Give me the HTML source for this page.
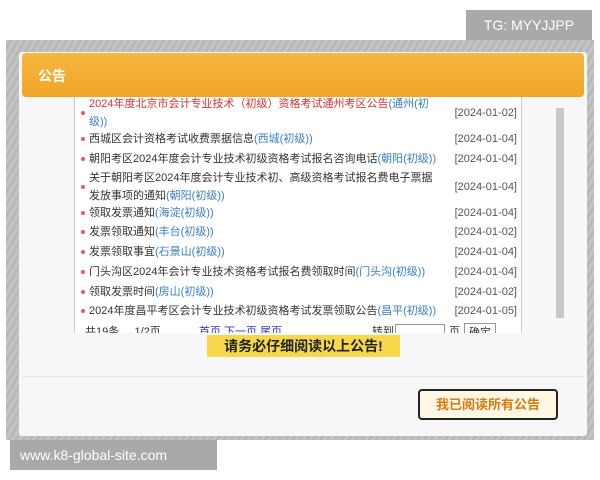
<!DOCTYPE html>
<html><head><meta charset="utf-8"><style>
*{margin:0;padding:0;box-sizing:border-box}
body{width:600px;height:480px;background:#fff;position:relative;overflow:hidden;font-family:"Liberation Sans","Noto Sans CJK SC",sans-serif}
.frame{position:absolute;left:6px;top:40px;width:588px;height:400px;background:repeating-linear-gradient(120deg,#c4c4c4 0 3px,#b8b8b8 3px 6px)}
.panel{position:absolute;left:19px;top:52px;width:568px;height:384px;background:#f7f7f7;border-radius:3px}
.head{position:absolute;left:22px;top:53px;width:562px;height:44px;background:linear-gradient(#f7b740,#f0a526);border-radius:4px;color:#fff;font-weight:bold;font-size:14px;padding:13px 0 0 16px}
.list{position:absolute;left:74px;top:97px;width:448px;height:236px;background:#fff;border-left:1px solid #b8cfe6;border-right:1px solid #b8cfe6;overflow:hidden;font-size:11px;color:#333}
.row{position:absolute;left:0;width:446px}
.row .t{position:absolute;left:14px;width:352px;line-height:18px}
.row .d{position:absolute;right:4px;color:#555;line-height:18px}
.row .b{position:absolute;left:6px;width:4px;height:4px;border-radius:2px;background:#e56;}
.c{color:#3a7fc4}
.sb{position:absolute;left:556px;top:108px;width:8px;height:210px;background:#c8c8c8}
.tg{position:absolute;left:466px;top:10px;width:126px;height:30px;background:#a9a9a9;color:#fff;font-size:14px;text-align:center;line-height:30px}
.ws{position:absolute;left:10px;top:440px;width:207px;height:30px;background:#a9a9a9;color:#fff;font-size:14px;line-height:30px;padding-left:10px}
.note{position:absolute;left:207px;top:335px;width:193px;height:22px;background:#f7d84a;font-weight:bold;font-size:14px;color:#222;text-align:center;line-height:22px}
.sep{position:absolute;left:22px;top:376px;width:562px;height:1px;background:#e6e6e6}
.btn{position:absolute;left:418px;top:389px;width:140px;height:31px;border:2px solid #222;border-radius:4px;background:#fff7e4;color:#d67b12;font-weight:bold;font-size:13px;text-align:center;line-height:27px}
</style></head><body>
<div class="tg">TG: MYYJJPP</div>
<div class="frame"></div>
<div class="panel"></div>
<div class="head">公告</div>
<div class="list">
<div class="row" style="top:-2px"><span class="b" style="top:16px"></span><div class="t" style="color:#e03030">2024年度北京市会计专业技术（初级）资格考试通州考区公告<span class="c">(通州(初级))</span></div><div class="d" style="top:9px">[2024-01-02]</div></div>
<div class="row" style="top:33px"><span class="b" style="top:7px"></span><div class="t">西城区会计资格考试收费票据信息<span class="c">(西城(初级))</span></div><div class="d">[2024-01-04]</div></div>
<div class="row" style="top:53px"><span class="b" style="top:7px"></span><div class="t" style="width:370px">朝阳考区2024年度会计专业技术初级资格考试报名咨询电话<span class="c">(朝阳(初级))</span></div><div class="d">[2024-01-04]</div></div>
<div class="row" style="top:72px"><span class="b" style="top:16px"></span><div class="t">关于朝阳考区2024年度会计专业技术初、高级资格考试报名费电子票据发放事项的通知<span class="c">(朝阳(初级))</span></div><div class="d" style="top:9px">[2024-01-04]</div></div>
<div class="row" style="top:107px"><span class="b" style="top:7px"></span><div class="t">领取发票通知<span class="c">(海淀(初级))</span></div><div class="d">[2024-01-04]</div></div>
<div class="row" style="top:126px"><span class="b" style="top:7px"></span><div class="t">发票领取通知<span class="c">(丰台(初级))</span></div><div class="d">[2024-01-02]</div></div>
<div class="row" style="top:146px"><span class="b" style="top:7px"></span><div class="t">发票领取事宜<span class="c">(石景山(初级))</span></div><div class="d">[2024-01-04]</div></div>
<div class="row" style="top:166px"><span class="b" style="top:7px"></span><div class="t">门头沟区2024年会计专业技术资格考试报名费领取时间<span class="c">(门头沟(初级))</span></div><div class="d">[2024-01-04]</div></div>
<div class="row" style="top:186px"><span class="b" style="top:7px"></span><div class="t">领取发票时间<span class="c">(房山(初级))</span></div><div class="d">[2024-01-02]</div></div>
<div class="row" style="top:205px"><span class="b" style="top:7px"></span><div class="t" style="width:370px">2024年度昌平考区会计专业技术初级资格考试发票领取公告<span class="c">(昌平(初级))</span></div><div class="d">[2024-01-05]</div></div>
<div class="row" style="top:226px;font-size:11px"><span style="position:absolute;left:10px">共19条 &nbsp;&nbsp;&nbsp; 1/2页</span><span style="position:absolute;left:124px;color:#33c">首页 下一页 尾页</span><span style="position:absolute;left:297px">转到</span><span style="position:absolute;left:320px;top:1px;width:50px;height:16px;border:1px solid #999"></span><span style="position:absolute;left:374px">页</span><span style="position:absolute;left:389px;width:32px;height:16px;border:1px solid #999;text-align:center">确定</span></div>
</div>
<div class="sb"></div>
<div class="note">请务必仔细阅读以上公告!</div>
<div class="sep"></div>
<div class="btn">我已阅读所有公告</div>
<div class="ws">www.k8-global-site.com</div>
</body></html>
